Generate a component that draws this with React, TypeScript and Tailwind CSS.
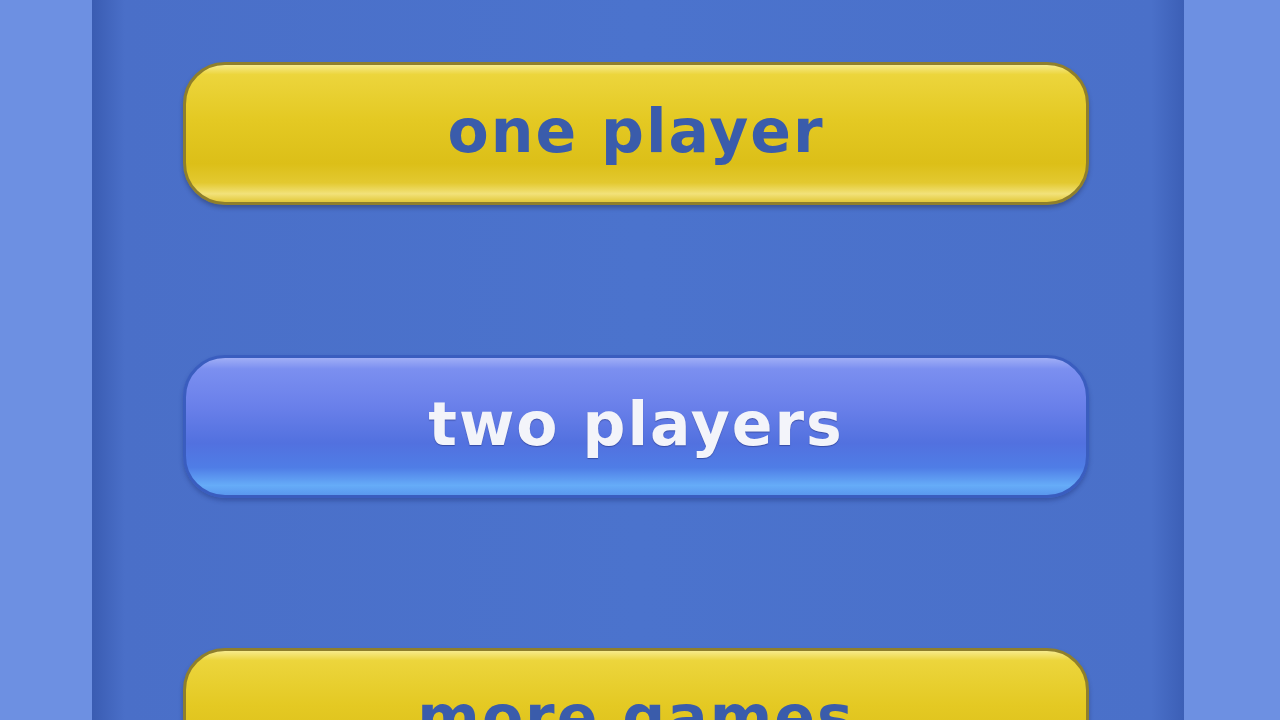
import React from 'react';

// Menu screen: three glossy pill buttons on a blue panel.

type Variant = 'yellow' | 'blue';

const styles: Record<Variant, string> = {
  yellow:
    'border-[3px] border-[#8f7f2c] bg-[linear-gradient(to_bottom,#f7eb8c_0%,#ecd53c_7%,#e4c923_40%,#dcbf18_72%,#e3c930_86%,#f2e27a_94%,#e2c83a_100%)] text-[#3a5cab] shadow-[0_3px_4px_rgba(40,50,90,0.45)]',
  blue:
    'border-[3px] border-[#3a5dbf] bg-[linear-gradient(to_bottom,#a0aef6_0%,#7b8ff0_8%,#6a80ea_35%,#5271df_62%,#4f7de6_80%,#66acf8_93%,#5a98ee_100%)] text-[#f3f4fa] shadow-[0_3px_4px_rgba(30,50,120,0.4)] [text-shadow:0_1px_1px_rgba(30,40,110,0.5)]',
};

function MenuButton({ label, variant }: { label: string; variant: Variant }) {
  return (
    <button
      type="button"
      className={`flex h-[143px] w-full shrink-0 items-center justify-center rounded-[42px] pb-[6px] font-['DejaVu_Sans',sans-serif] text-[60px] font-bold tracking-[2px] ${styles[variant]}`}
    >
      {label}
    </button>
  );
}

export default function App() {
  return (
    <div className="flex h-[720px] w-[1280px] overflow-hidden bg-[#6d90e2] pl-[92px]">
      <div className="flex h-full w-[1092px] flex-col gap-[150px] bg-[linear-gradient(to_right,#3a5cb2_0%,#4a6fc8_3%,#4b73cd_50%,#4a70c9_97%,#3c5fb6_100%)] pt-[62px] pl-[91px] pr-[95px]">
        <MenuButton label="one player" variant="yellow" />
        <MenuButton label="two players" variant="blue" />
        <MenuButton label="more games" variant="yellow" />
      </div>
    </div>
  );
}
